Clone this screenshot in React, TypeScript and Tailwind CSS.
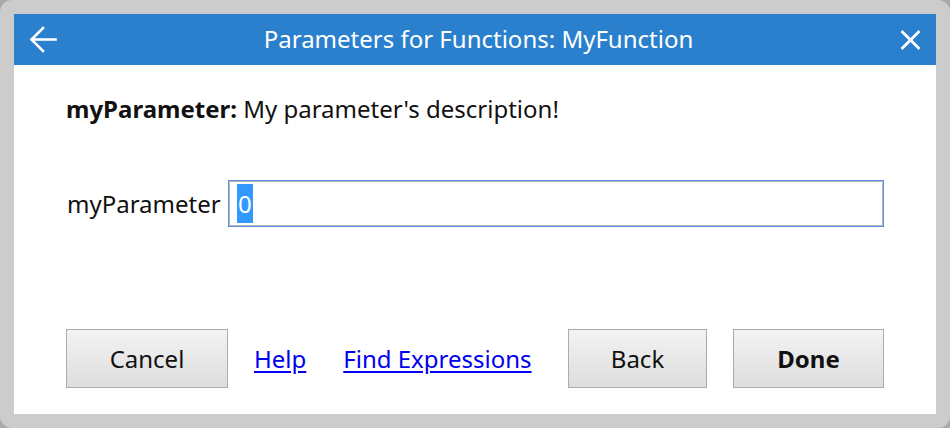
import React from "react";

const font = { fontFamily: '"Segoe UI", "Noto Sans", "Open Sans", sans-serif' };

function Btn({ children, className }: { children: React.ReactNode; className: string }) {
  return (
    <button
      className={
        "h-[59px] border border-[#acacac] bg-gradient-to-b from-[#f3f3f3] to-[#dddddd] text-[24px] text-[#111] flex items-center justify-center " +
        className
      }
    >
      {children}
    </button>
  );
}

export default function App() {
  return (
    <div className="w-[950px] h-[428px] bg-[#a9a9a9]" style={font}>
      <div className="w-full h-full rounded-[12px] bg-[#cccccc] p-[14px] flex">
        <div className="flex-1 flex flex-col bg-white">
          <div className="h-[51px] bg-[#2b80cd] flex items-center text-white shrink-0 px-[15px]">
            <svg width="28" height="27" viewBox="0 0 28 27" fill="none" stroke="white" strokeWidth="2.6" strokeLinecap="square">
              <path d="M26.5 13.5 H3" />
              <path d="M14 2 L2.5 13.5 L14 25" />
            </svg>
            <div className="flex-1 text-center text-[24px] leading-none pb-[2px]">Parameters for Functions: MyFunction</div>
            <svg width="21" height="20" viewBox="0 0 21 20" fill="none" stroke="white" strokeWidth="2.6">
              <path d="M1.5 1 L19.5 19" />
              <path d="M19.5 1 L1.5 19" />
            </svg>
          </div>
          <div className="flex-1 flex flex-col pl-[52px] pr-[52px] pt-[28px] pb-[26px] text-[#111]">
            <div className="text-[24px] leading-[32px]">
              <span className="font-bold">myParameter:</span> My parameter's description!
            </div>
            <div className="flex items-center mt-[55px]">
              <span className="text-[24px] w-[162px] pl-[1px]">myParameter</span>
              <div className="flex-1 h-[47px] border border-[#5a90dd] shadow-[inset_0_0_0_1px_#b9b9b9] flex items-center pl-[8px]">
                <span className="bg-[#3399ff] text-white text-[24px] leading-[39px] px-[1px]">0</span>
              </div>
            </div>
            <div className="flex-1" />
            <div className="flex items-center">
              <Btn className="w-[162px]">Cancel</Btn>
              <a href="#" className="ml-[26px] text-[24px] text-[#0000ee] underline underline-offset-[3px]">Help</a>
              <a href="#" className="ml-[37px] text-[24px] text-[#0000ee] underline underline-offset-[3px]">Find Expressions</a>
              <div className="flex-1" />
              <Btn className="w-[139px]">Back</Btn>
              <Btn className="w-[151px] ml-[26px] font-bold">Done</Btn>
            </div>
          </div>
        </div>
      </div>
    </div>
  );
}
